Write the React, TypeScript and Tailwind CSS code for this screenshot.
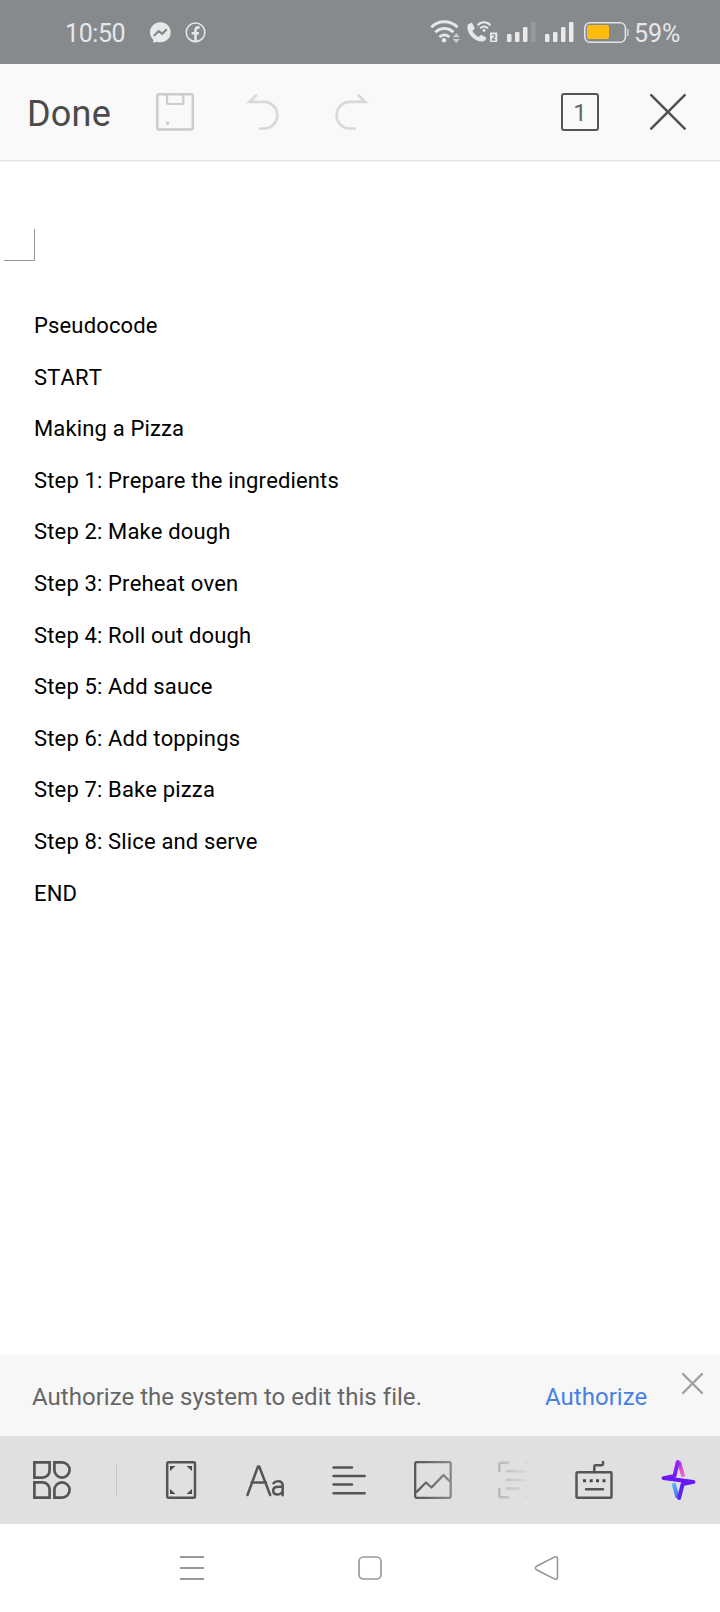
import type { ReactNode } from "react";

type IconProps = { box: string; className: string; children: ReactNode };

function Icon({ box, className, children }: IconProps) {
  return (
    <svg viewBox={box} fill="none" className={`block shrink-0 ${className}`}>
      {children}
    </svg>
  );
}

function StatusBar() {
  return (
    <header className="flex h-16 items-center bg-[#868a8d] text-[25px] leading-none text-[#e6e7e8]">
      <span className="ml-[65px] w-[85px] pt-[3px] tracking-[-0.400px]">10:50</span>
      <Icon box="150 0 60 64" className="h-16 w-[60px]">
        <path
          d="M160.500 22.200c-6 0-10.500 4.400-10.500 10.100 0 3 1.200 5.600 3.300 7.400l.3 3.300 3.100-1.300c1.200.4 2.500.6 3.800.6 6 0 10.200-4.400 10.200-10s-4.200-10.100-10.200-10.100z"
          fill="#e8e9e9"
        />
        <path d="M154.500 35.300l4.300-4.300 3.300 2.900 4-4" stroke="#868a8d" strokeWidth="2.200" strokeLinejoin="round" strokeLinecap="round" />
        <circle cx="195.500" cy="32.300" r="9.300" stroke="#e6e7e8" strokeWidth="1.600" />
        <path d="M195.500 41.500v-11c0-2.500 1.300-3.400 4.100-3.100M191.600 33.200h7.300" stroke="#e6e7e8" strokeWidth="2.600" />
      </Icon>
      <Icon box="428 0 204 64" className="ml-[218px] h-16 w-[204px]">
        <g stroke="#e6e7e8" strokeWidth="3">
          <path d="M431.300 27.300c7.400-7.400 18.800-7.400 26.200 0" />
          <path d="M435.300 32.300c5.200-5.200 13-5.200 18.200 0" />
          <path d="M439.400 37c2.900-2.800 7.100-2.800 10 0" />
        </g>
        <circle cx="444" cy="40.300" r="2.200" fill="#e6e7e8" />
        <path d="M456.300 33l3.600 4.300h-7.200zM456.300 43.300l3.600-4.300h-7.200z" fill="#c8cacb" />
        <path
          d="M468 24.500l2.700-1.500c.8-.4 1.500-.1 1.900.7l1.900 4.100c.3.700.1 1.300-.5 1.700l-1.600 1.200c1.300 2.700 3.300 4.800 6.100 6.200l1.700-1.500c.5-.5 1.100-.5 1.700-.2l3.600 1.900c.7.400.9 1 .6 1.700-.7 1.700-2 2.800-4.400 2.800-7.300-.7-13.900-7.300-14.300-13.700 0-1.500.1-2.700.6-3.400z"
          fill="#e6e7e8"
        />
        <g stroke="#e6e7e8" strokeWidth="2">
          <path d="M477.700 25.300c3.600-4 9.100-4 12.700 0" />
          <path d="M480.200 28.400c2.300-2.500 5.500-2.500 7.800 0" />
        </g>
        <circle cx="484.100" cy="30.500" r="1.400" fill="#e6e7e8" />
        <rect x="490" y="32.500" width="7.300" height="9.500" fill="#e6e7e8" />
        <path d="M492 35.500c.5-1 3-1 3 .6 0 1.200-2.600 2.300-2.800 3.800h3.100" stroke="#777b7e" strokeWidth="1.100" />
        <g fill="#e9e9e9">
          <rect x="507" y="34" width="4.500" height="8" rx="1" />
          <rect x="515" y="32" width="4.500" height="10" rx="1" />
          <rect x="523" y="27" width="4.500" height="15" rx="1" />
          <rect x="531" y="22" width="4.500" height="20" rx="1" fill="#989b9e" />
          <rect x="545" y="34" width="4.500" height="8" rx="1" />
          <rect x="553" y="32" width="4.500" height="10" rx="1" />
          <rect x="561" y="27" width="4.500" height="15" rx="1" />
          <rect x="569" y="22" width="4.500" height="20" rx="1" />
        </g>
        <rect x="584.800" y="22.800" width="40.600" height="19.400" rx="5" stroke="#e1e3e4" strokeWidth="1.600" />
        <rect x="587" y="25" width="22" height="14" rx="2" fill="#ffbc0e" />
        <path d="M627.800 29v7" stroke="#c8cacb" strokeWidth="1.800" />
      </Icon>
      <span className="ml-[2px] pt-[3px]">59%</span>
    </header>
  );
}

function TopToolbar() {
  return (
    <nav className="flex h-[97px] items-start border-b border-[#e8e8e8] bg-[#f9f9f9]">
      <span className="ml-[27px] w-[123px] pt-[29px] text-[36px] leading-[42px] tracking-[0.200px] text-[#4a4a4a]">Done</span>
      <Icon box="150 64 240 96" className="h-24 w-60">
        <g stroke="#cccccc" strokeWidth="2.500">
          <rect x="157.300" y="94.300" width="35.500" height="35.300" rx="1.500" />
          <path d="M167 94.500v8.500q0 1 1 1h14.300q1 0 1-1v-8.500" strokeWidth="2.200" />
          <path d="M166 123.200h3" strokeWidth="3.300" />
        </g>
        <g stroke="#d8d8d8" strokeWidth="2.700" strokeLinecap="round">
          <path d="M256 95.500l-6.700 6.400h14.700a13.200 13.200 0 0 1 0 26.600h-4" />
          <path d="M358.500 95.500l6.700 6.400h-15.300a13.200 13.200 0 0 0 0 26.600h5" />
        </g>
      </Icon>
      <div className="mt-[29px] ml-[171px] flex h-[38px] w-[38px] items-center justify-center rounded-[3px] border-2 border-[#555] pt-[2px] text-[24px] leading-none text-[#666]">
        1
      </div>
      <Icon box="645 64 46 96" className="ml-[46px] h-24 w-[46px]">
        <path d="M651.200 95.200l33.500 33.500M684.700 95.200l-33.500 33.500" stroke="#505050" strokeWidth="2.500" strokeLinecap="round" />
      </Icon>
    </nav>
  );
}

const lines = [
  "Pseudocode",
  "START",
  "Making a Pizza",
  "Step 1: Prepare the ingredients",
  "Step 2: Make dough",
  "Step 3: Preheat oven",
  "Step 4: Roll out dough",
  "Step 5: Add sauce",
  "Step 6: Add toppings",
  "Step 7: Bake pizza",
  "Step 8: Slice and serve",
  "END",
];

function Document() {
  return (
    <main className="h-[1194px] bg-white text-[22px] text-black">
      <div className="h-px bg-[#f4f4f4]" />
      <div className="mt-[67px] ml-[4px] h-[32px] w-[31px] border-r border-b border-[#999]" />
      <div className="mt-[39px] pl-[34px] tracking-[0.150px] [font-kerning:none]">
        {lines.map((line) => (
          <p key={line} className="h-[51.600px] leading-[51.600px] whitespace-nowrap">
            {line}
          </p>
        ))}
      </div>
    </main>
  );
}

function AuthorizeBar() {
  return (
    <section className="flex h-[81px] items-start bg-[#f7f7f7] text-[24px] leading-[28px] tracking-[0.030px]">
      <p className="mt-[28px] ml-[32px] w-[513px] whitespace-nowrap text-[#666]">Authorize the system to edit this file.</p>
      <span className="mt-[28px] w-[131px] text-[#4a7fe5]">Authorize</span>
      <Icon box="676 1355 30 50" className="h-[50px] w-[30px]">
        <path d="M683 1374l19 19M702 1374l-19 19" stroke="#9a9fa4" strokeWidth="2.300" strokeLinecap="round" />
      </Icon>
    </section>
  );
}

function BottomToolbar() {
  return (
    <nav className="flex h-[88px] bg-[#e0e0e0]">
      <Icon box="0 1436 720 88" className="h-[88px] w-[720px]">
        <defs>
          <linearGradient id="imageFade" gradientUnits="userSpaceOnUse" x1="414" y1="0" x2="452" y2="0">
            <stop stopColor="#555" />
            <stop offset="1" stopColor="#8b8b8b" />
          </linearGradient>
          <linearGradient id="scanFade" gradientUnits="userSpaceOnUse" x1="498" y1="0" x2="529" y2="0">
            <stop stopColor="#b8b8b8" />
            <stop offset="1" stopColor="#dddddd" />
          </linearGradient>
          <linearGradient id="pink" gradientUnits="userSpaceOnUse" x1="679" y1="1461" x2="684" y2="1477">
            <stop stopColor="#9a28ec" />
            <stop offset="0.500" stopColor="#e04cd2" />
            <stop offset="1" stopColor="#f070d8" />
          </linearGradient>
          <linearGradient id="blue" gradientUnits="userSpaceOnUse" x1="673" y1="1484" x2="679" y2="1498">
            <stop stopColor="#58b0f5" />
            <stop offset="1" stopColor="#4a68f4" />
          </linearGradient>
          <linearGradient id="violet" gradientUnits="userSpaceOnUse" x1="0" y1="1460" x2="0" y2="1500">
            <stop stopColor="#9b27f0" />
            <stop offset="0.500" stopColor="#6b16fa" />
            <stop offset="1" stopColor="#4a30ea" />
          </linearGradient>
        </defs>
        <g stroke="#555" strokeWidth="2.700">
          <path d="M34.400 1462.400h15.200v8.200a7 7 0 0 1-7 7h-8.200z" />
          <path d="M54.400 1462.400h7.600a7.600 7.600 0 1 1-7.600 7.600z" />
          <path d="M34.400 1482.400h8.200a7 7 0 0 1 7 7v8.200h-15.200z" />
          <path d="M54.400 1497.600v-7.600a7.600 7.600 0 1 1 7.600 7.600z" />
          <rect x="167.200" y="1462.200" width="27.800" height="35.600" rx="1.500" strokeWidth="2.500" />
        </g>
        <path d="M116.500 1464v32" stroke="#c6c6c6" />
        <path d="M170 1466h5.500l-5.500 5zM192 1466h-5.500l5.500 5zM170 1494h5.500l-5.500-5zM192 1494h-5.500l5.500-5z" fill="#4b4b4b" />
        <g stroke="#555" strokeWidth="2.500" strokeLinecap="round" strokeLinejoin="round">
          <path d="M247.500 1495l10.500-28.500h1.200l11 28.500M251.500 1482.500h14.500" />
          <path d="M273.500 1483.200c1-1.400 2.600-2 4.700-2 3 0 4.500 1.500 4.500 4.500v9.500M282.700 1486.700h-4.500c-3.500 0-5 1.400-5 3.800s1.500 4 4.200 4c3.200 0 5.300-2 5.300-5" />
          <path d="M333.500 1467.500h18.500M333.500 1476h31.200M333.500 1484.500h18.500M333.500 1493.300h31.200" />
          <rect x="576.500" y="1472.300" width="35" height="25.500" rx="1" />
          <path d="M594.300 1472v-5.500q0-1.200 1.200-1.200h6.300q1.200 0 1.200-1.200v-2M586 1489.200h17" />
        </g>
        <path d="M583 1480.700h3M589.700 1480.700h3M596 1480.700h3M602.500 1480.700h3" stroke="#484848" strokeWidth="3" />
        <g stroke="url(#imageFade)" strokeWidth="2.300" strokeLinejoin="round">
          <rect x="415.200" y="1462.200" width="35.500" height="35.600" rx="1.300" />
          <path d="M416 1492.500l10-10 5.500 5 12-12.500 6.500 6.500" />
        </g>
        <g stroke="url(#scanFade)" strokeWidth="2.500">
          <path d="M499.300 1472v-7q0-2.300 2.300-2.300h7.400M499.300 1488v7q0 2.300 2.300 2.300h7.400" />
          <path d="M525 1462.500l3 1M525 1497.500l3-1M506 1471.300l21 .1M506 1480l21 .1M506 1488.500l14 .1" />
        </g>
        <path d="M679 1462l4.300 14.800" stroke="url(#pink)" strokeWidth="4" />
        <path d="M673.600 1483.300l4 14.500" stroke="url(#blue)" strokeWidth="4" />
        <path
          d="M677.800 1462l-3.300 13.900-10.900 2.200 29.800 3.800-10.700 2.100-3.600 14"
          stroke="url(#violet)"
          strokeWidth="4"
          strokeLinejoin="round"
          strokeLinecap="round"
        />
      </Icon>
    </nav>
  );
}

function SystemNav() {
  return (
    <footer className="flex h-[88px] bg-white">
      <Icon box="0 1524 720 88" className="h-[88px] w-[720px]">
        <g stroke="#999" strokeWidth="1.900">
          <path d="M180 1557h24M180 1568h24M180 1579h24" />
          <rect x="359" y="1557" width="22" height="22" rx="4.500" strokeWidth="1.700" />
          <path d="M536.500 1566.300l18-9.300q3-1 3 2v18q0 3-3 2l-18-9.300q-2.200-1.700 0-3.400z" strokeWidth="1.600" />
        </g>
      </Icon>
    </footer>
  );
}

export default function App() {
  return (
    <div className="flex h-[1612px] w-[720px] flex-col overflow-hidden bg-white font-['Roboto',sans-serif]">
      <StatusBar />
      <TopToolbar />
      <Document />
      <AuthorizeBar />
      <BottomToolbar />
      <SystemNav />
    </div>
  );
}
